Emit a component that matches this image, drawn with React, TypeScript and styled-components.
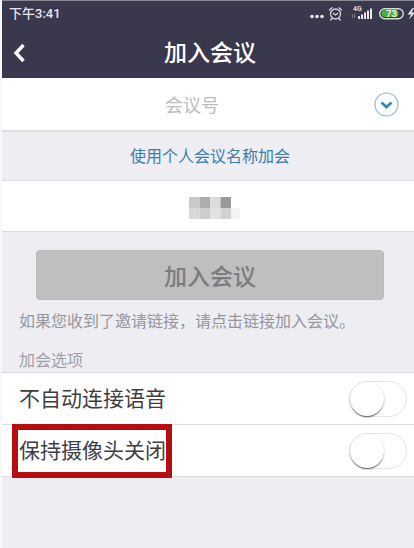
import React from "react";
import styled, { createGlobalStyle } from "styled-components";

const GlobalStyle = createGlobalStyle`
  *, *::before, *::after { box-sizing: border-box; }
  body { margin: 0; background: #fdfdfd; }
  button, input { font: inherit; }
`;

const Screen = styled.div`
  min-height: 100vh;
  border-left: 2px solid #f8f8fa;
  background: #ededf2;
  color: #3c3c40;
  font-family: Roboto, "Noto Sans CJK SC", sans-serif;
  overflow: hidden;
`;

const Header = styled.header`
  background: #39384d;
  border-top: 1px solid #8a8996;
  color: #fff;
`;

const StatusBar = styled.div`
  display: flex;
  align-items: center;
  justify-content: space-between;
  height: 26px;
  padding-left: 7px;
  font-size: 13px;
  font-weight: 500;
  line-height: 20px;
  color: #e6e5ec;
`;

const StatusIcons = styled.svg`
  display: block;
  flex: none;
`;

const TitleBar = styled.div`
  display: grid;
  grid-template-columns: 40px 1fr 36px;
  align-items: center;
  height: 51px;
`;

const BackButton = styled.button`
  display: flex;
  align-items: center;
  height: 40px;
  padding: 0 0 0 10px;
  border: 0;
  background: none;
  color: inherit;
`;

const Title = styled.h1`
  margin: 0;
  padding-top: 2px;
  font-size: 23px;
  font-weight: 500;
  line-height: 32px;
  text-align: center;
`;

const MeetingField = styled.div`
  display: flex;
  align-items: center;
  height: 54px;
  background: #fff;
  border-bottom: 2px solid #dfdfe2;
`;

const MeetingInput = styled.input`
  flex: 1;
  min-width: 0;
  height: 40px;
  padding: 2px 0 0 8px;
  border: 0;
  outline: 0;
  background: none;
  text-align: center;
  font-size: 18px;
  color: #3c3c40;
  &::placeholder { color: #bcbcbf; opacity: 1; }
`;

const HistoryButton = styled.button`
  display: flex;
  flex: none;
  margin-right: 15px;
  padding: 0;
  border: 0;
  background: none;
`;

const LinkBand = styled.div`
  padding: 13px 0 11px 4px;
  text-align: center;
  line-height: 24px;
`;

const NameLink = styled.a`
  color: #3c7eaa;
  font-size: 16px;
  text-decoration: none;
`;

const NameField = styled.div`
  display: flex;
  justify-content: center;
  align-items: center;
  height: 52px;
  padding: 4px 0 0 14px;
  background: #fff;
  border: solid #dcdcdf;
  border-width: 1px 0;
`;

const JoinButton = styled.button`
  display: block;
  width: calc(100% - 64px);
  height: 50px;
  margin: 18px 30px 0 34px;
  padding: 0;
  border: 1px solid #bababb;
  border-radius: 4px;
  background: #bfbfbf;
  color: #7c7c7e;
  font-size: 23px;
  font-weight: 500;
`;

const Note = styled.p`
  margin: 0;
  padding: 10px 0 0 17px;
  color: #96969c;
  font-size: 16px;
  line-height: 24px;
`;

const SectionTitle = styled.h2`
  margin: 0;
  padding: 16px 0 0 17px;
  color: #a0a0a6;
  font-size: 16px;
  font-weight: 400;
  line-height: 22px;
`;

const Options = styled.div`
  background: #fff;
  border-top: 1px solid #d9d9dc;
`;

const OptionRow = styled.label`
  display: flex;
  align-items: center;
  justify-content: space-between;
  height: 52px;
  padding: 0 7px 0 17px;
  border-bottom: 1px solid #dcdcdf;
`;

const OptionText = styled.span<{ $marked?: boolean }>`
  position: relative;
  font-size: 21px;
  line-height: 30px;
  color: #3e3e42;
  &::after {
    content: "";
    display: ${(p) => (p.$marked ? "block" : "none")};
    position: absolute;
    inset: -12px -6px -12px -7px;
    border: 6px solid #b50d12;
  }
`;

const Switch = styled.input`
  appearance: none;
  display: flex;
  flex: none;
  width: 58px;
  height: 36px;
  margin: 0;
  border: 1px solid #e4e4e2;
  border-radius: 18px;
  background: #fff;
  &::before {
    content: "";
    width: 34px;
    height: 34px;
    border-radius: 50%;
    background: #fff;
    box-shadow: 0 2px 1px -1px #666, 0 1px 2px #aaa;
  }
  &:checked { justify-content: flex-end; background: #5fc46b; }
`;

const MOSAIC = [
  ["#c9c9c9", "#adadad", "#dcdcdc", "#999999"],
  ["#d8d8d8", "#cdcdcd", "#e2e2e2", "#d2d2d2"],
];

const OPTIONS = [
  { text: "不自动连接语音", marked: false },
  { text: "保持摄像头关闭", marked: true },
];

export default function App() {
  return (
    <>
      <GlobalStyle />
      <Screen>
        <Header>
          <StatusBar>
            <span>下午3:41</span>
            <StatusIcons width="106" height="26" viewBox="0 0 106 26" role="img" aria-label="4G 73">
              <g fill="#e6e5ec">
                <circle cx="4" cy="15.500" r="1.800" />
                <circle cx="9" cy="15.500" r="1.800" />
                <circle cx="14" cy="15.500" r="1.800" />
              </g>
              <g fill="none" stroke="#d8d7e0" strokeWidth="1.300" strokeLinecap="round">
                <circle cx="27.500" cy="13" r="5" />
                <path d="M25.500 12.500l2 1.500 2-1.500M21.500 9l2.500-2.300M33.500 9L31 6.700M24 17.500l-1.300 1.500M31 17.500l1.300 1.500" />
              </g>
              <text x="45" y="9.500" fontSize="7" fontWeight="700" fill="#d8d7e0">4G</text>
              <path d="M44.500 13v4M44.500 13l-1 1M46.500 12.500v4l1-1" stroke="#77768a" fill="none" />
              <g fill="#e6e5ec">
                <rect x="50" y="15" width="2" height="3" />
                <rect x="53" y="13.500" width="2" height="4.500" />
                <rect x="56" y="11.500" width="2" height="6.500" />
                <rect x="59" y="9.500" width="2" height="8.500" />
                <rect x="62" y="7.500" width="2" height="10.500" />
              </g>
              <rect x="71.700" y="7.700" width="23.600" height="10" rx="5" fill="none" stroke="#d5dfd4" strokeWidth="1.400" />
              <rect x="73.500" y="9.300" width="17" height="6.800" rx="3" fill="#4fae3f" />
              <text x="83.500" y="16.300" textAnchor="middle" fontSize="9.500" fontWeight="700" fill="#e9f5e5">73</text>
              <path d="M104.500 7l-5 6.500h3.500l-2 5 6-7h-3.500l2.500-4.500z" fill="#e6e5ec" />
            </StatusIcons>
          </StatusBar>
          <TitleBar>
            <BackButton aria-label="返回">
              <svg width="14" height="20" viewBox="0 0 14 20" fill="none" stroke="#fff" strokeWidth="3.400">
                <path d="M11.500 2L4 10l7.500 8" />
              </svg>
            </BackButton>
            <Title>加入会议</Title>
          </TitleBar>
        </Header>
        <main>
          <MeetingField>
            <MeetingInput placeholder="会议号" aria-label="会议号" />
            <HistoryButton aria-label="选择会议号">
              <svg width="25" height="25" viewBox="0 0 25 25" fill="none">
                <circle cx="12.500" cy="12.500" r="11.500" fill="#fbfeff" stroke="#9cb8c4" strokeWidth="1.200" />
                <path d="M7.500 10.500l5 4.500 5-4.500" stroke="#3f84ad" strokeWidth="2.800" />
              </svg>
            </HistoryButton>
          </MeetingField>
          <LinkBand>
            <NameLink href="#name">使用个人会议名称加会</NameLink>
          </LinkBand>
          <NameField>
            <svg width="52" height="22" viewBox="0 0 52 22" aria-hidden="true">
              {MOSAIC.map((line, y) =>
                line.map((fill, x) => (
                  <rect key={`${x}-${y}`} x={x * 10.5} y={y * 11} width="10.500" height="11" fill={fill} />
                ))
              )}
              <rect x="42" y="11" width="9" height="11" fill="#f4f4f4" />
            </svg>
          </NameField>
          <JoinButton type="button">加入会议</JoinButton>
          <Note>如果您收到了邀请链接，请点击链接加入会议。</Note>
          <SectionTitle>加会选项</SectionTitle>
          <Options>
            {OPTIONS.map((o) => (
              <OptionRow key={o.text}>
                <OptionText $marked={o.marked}>{o.text}</OptionText>
                <Switch type="checkbox" role="switch" />
              </OptionRow>
            ))}
          </Options>
        </main>
      </Screen>
    </>
  );
}
